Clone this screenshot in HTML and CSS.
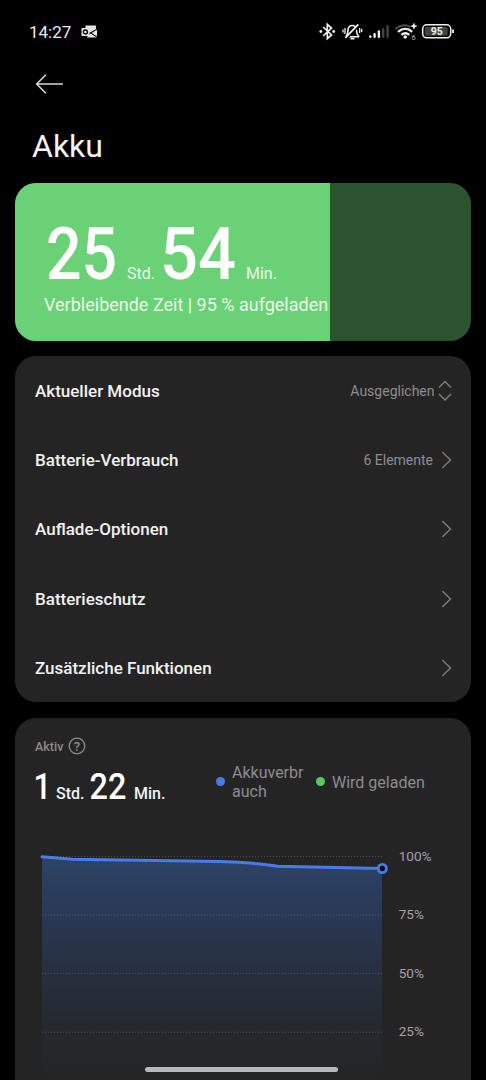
FILE: index.html
```html
<!DOCTYPE html>
<html lang="de">
<head>
<meta charset="utf-8">
<title>Akku</title>
<link rel="stylesheet" href="styles.css">
</head>
<body>
<div class="screen">
  <header class="status">
    <span class="clock">14:27</span>
    <svg class="mail" width="17" height="14" viewBox="0 0 17 14">
      <path d="M4.500 .5H15v5.500L10 8.500 4.500 5z M5.500 12.500H15.500V9l-5-1.500z" fill="#e4e4e4"/>
      <path d="M8.500 8.500L16 4.200M9.500 7.500l6 4.300" stroke="#000" stroke-width="1.100"/>
      <path d="M16 4.800v6.400L11 8z" fill="#e4e4e4"/>
      <rect x=".5" y="3" width="8" height="8" fill="#e4e4e4"/>
      <circle cx="4.400" cy="7" r="2" fill="none" stroke="#000" stroke-width="1.300"/>
    </svg>
    <svg class="tray" width="140" height="24" viewBox="316 20 140 24" fill="none" stroke="#f0f0f0">
      <path d="M323.200 27l8.300 8-4.200 3.700V24.300l4.200 3.700-8.300 8" stroke-width="1.700"/>
      <circle cx="320.800" cy="31.500" r="1.400" fill="#f0f0f0" stroke="none"/>
      <circle cx="333.700" cy="31.500" r="1.400" fill="#f0f0f0" stroke="none"/>
      <path d="M346.500 35.500c1.500-1.300 1.300-3 1.400-5 .3-3.200 2-5 4.300-5s4 1.800 4.300 5c.1 2 0 3.700 2 5.300v1h-12z" stroke-width="1.600"/>
      <path d="M350.500 38.600h4" stroke-width="1.800"/>
      <path d="M346.300 38.800l13.500-14" stroke="#000" stroke-width="2"/>
      <path d="M345.300 37.800L358.300 24.300" stroke-width="1.800"/>
      <path d="M345 28v6M343 29.500v3M359.700 28v5M361.700 29v3" stroke-width="1.300"/>
      <g stroke-width="2.400" stroke-linecap="round">
        <path d="M370.300 36.500v.3M374.600 34.300v2.500M378.900 31.500v5.300"/>
        <path d="M383.200 29v7.800M387.500 26.200v10.600" stroke="#444"/>
      </g>
      <path d="M395.500 29c5-4.500 11.500-4.500 14.800-2" stroke="#4b4b4b" stroke-width="2.300"/>
      <path d="M398 31.800c4.500-4 10-4 14.200 0M401.300 34.800c2.600-2 5.400-2 7.900 0" stroke-width="2.300"/>
      <circle cx="405.200" cy="37" r="1.800" fill="#f0f0f0" stroke="none"/>
      <path d="M413.900 23.500v5.200M411.300 26.100h5.200" stroke-width="1.700"/>
      <text x="411.400" y="39.500" class="wifi-gen">6</text>
      <rect x="422.700" y="24.800" width="28" height="13" rx="4" stroke-width="1.500"/>
      <rect x="424.700" y="26.800" width="23" height="9" rx="2" fill="#424242" stroke="none"/>
      <path d="M453 29.500v3.500" stroke-width="1.800"/>
      <text x="436.700" y="35.400" class="level">95</text>
    </svg>
  </header>

  <nav class="back">
    <svg width="30" height="22" viewBox="0 0 30 22" fill="none" stroke="#d6d6d6" stroke-width="1.600"><path d="M1.700 11H28M10.800 1.800L1.700 11l9.100 9.200"/></svg>
  </nav>
  <h1 class="title">Akku</h1>

  <section class="charge">
    <div class="fill">
      <div class="remaining">
        <span class="num n25"><b>25</b></span><span class="unit u-std">Std.</span><span class="num n54"><b>54</b></span><span class="unit">Min.</span>
      </div>
      <div class="caption">Verbleibende Zeit | 95 % aufgeladen</div>
    </div>
  </section>

  <section class="menu">
    <div class="row"><span>Aktueller Modus</span><span class="value mode">Ausgeglichen</span>
      <svg class="sort" width="14" height="22" viewBox="0 0 14 22"><path d="M1 7.500l6-6 6 6M1 14l6 6 6-6"/></svg></div>
    <div class="row"><span>Batterie-Verbrauch</span><span class="value">6 Elemente</span>
      <svg class="chev" width="11" height="18" viewBox="0 0 11 18"><path d="M1.300 1l8.200 8-8.200 8"/></svg></div>
    <div class="row"><span>Auflade-Optionen</span>
      <svg class="chev" width="11" height="18" viewBox="0 0 11 18"><path d="M1.300 1l8.200 8-8.200 8"/></svg></div>
    <div class="row"><span>Batterieschutz</span>
      <svg class="chev" width="11" height="18" viewBox="0 0 11 18"><path d="M1.300 1l8.200 8-8.200 8"/></svg></div>
    <div class="row"><span>Zusätzliche Funktionen</span>
      <svg class="chev" width="11" height="18" viewBox="0 0 11 18"><path d="M1.300 1l8.200 8-8.200 8"/></svg></div>
  </section>

  <section class="usage">
    <div class="active">
      <span>Aktiv</span>
      <svg width="18" height="18" viewBox="0 0 18 18"><circle cx="9" cy="9" r="7.800" fill="none" stroke="#8c8c8c" stroke-width="1.300"/><text x="9" y="13.800" class="help">?</text></svg>
    </div>
    <div class="summary">
      <div class="duration">
        <span class="small n1"><b>1</b></span><span class="sunit s-std">Std.</span><span class="small n22"><b>22</b></span><span class="sunit">Min.</span>
      </div>
      <div class="legend">
        <i class="dot blue"></i><span class="used">Akkuverbr<br>auch</span>
        <i class="dot green"></i><span class="charging">Wird geladen</span>
      </div>
    </div>
    <svg class="chart" width="456" height="240" viewBox="15 840 456 240">
      <defs>
        <linearGradient id="area" x1="0" y1="857" x2="0" y2="1080" gradientUnits="userSpaceOnUse">
          <stop offset="0" stop-color="#2d4368"/>
          <stop offset=".25" stop-color="#293956"/>
          <stop offset=".5" stop-color="#273041"/>
          <stop offset=".75" stop-color="#25292f"/>
          <stop offset="1" stop-color="#242424"/>
        </linearGradient>
      </defs>
      <path d="M42 857L72 859.500 220 861.500 258 864 278 866.300 382 868.500V1080H42z" fill="url(#area)"/>
      <g class="grid"><path d="M42 856.500H384M42 915H384M42 973.500H384M42 1032.200H384"/></g>
      <path d="M42 856.800L72 859.300 220 861.400Q240 862 258 863.800L278 866.200 382 868.500" class="line"/>
      <circle cx="382.300" cy="868.500" r="4.100" fill="#0b0e18" stroke="#4a7bea" stroke-width="2.900"/>
      <g class="ticks"><text x="398.700" y="860.700">100%</text><text x="398.700" y="919.200">75%</text><text x="398.700" y="977.600">50%</text><text x="398.700" y="1036.200">25%</text></g>
    </svg>
  </section>
  <div class="home"></div>
</div>
</body>
</html>
```

FILE: styles.css
```css
* { box-sizing: border-box; }
body { margin: 0; background: #000; color: #f2f2f2; font-family: Roboto, "Liberation Sans", sans-serif; }
svg { display: block; flex: none; }
.screen { position: relative; width: 486px; height: 1080px; overflow: hidden; padding: 0 15px; }

.status { display: flex; align-items: center; height: 64px; padding-left: 14px; }
.clock { width: 52px; font-size: 17px; color: #ececec; }
.tray { margin-left: auto; margin-right: 15px; }
.mail { margin-bottom: 1px; }
.wifi-gen { font-size: 7.5px; fill: #bbb; stroke: none; }
.level { font-size: 10.5px; font-weight: 700; fill: #f0f0f0; stroke: none; text-anchor: middle; }

.back { height: 42px; padding: 9px 0 0 20px; }
.title { margin: 0; height: 77px; padding: 20px 0 0 17px; font-size: 32px; line-height: 40px; font-weight: 400; }

.charge { height: 157.500px; border-radius: 21px; overflow: hidden; background: #2b532f; }
.fill { width: 315px; height: 100%; padding: 37px 0 0 29px; background: #6bd176; color: #fff; white-space: nowrap; }
.remaining { display: flex; align-items: baseline; height: 70px; line-height: 70px; }
.num { font-size: 72px; }
.num b, .small b { display: inline-block; font-weight: 500; transform: scaleX(.87); transform-origin: 0 0; }
.n25 { width: 83px; padding-left: 2px; }
.n54 { width: 86px; }
.n54 b { transform: scaleX(.93); }
.unit { font-size: 16px; color: #e9f9ea; }
.u-std { width: 33px; }
.caption { margin-top: 4px; font-size: 18px; line-height: 22px; color: #e9f9ea; }

.menu { margin-top: 15.500px; height: 346px; border-radius: 21px; background: #242424; }
.row { display: flex; align-items: center; height: 69.300px; padding: 0 19px 0 20px; font-size: 17px; font-weight: 500; }
.row svg { margin-left: auto; fill: none; stroke: #7c7c7c; stroke-width: 1.500; }
.value { margin-left: auto; font-size: 14px; font-weight: 400; color: #8d8d8d; }
.value + .chev { margin-left: 8px; }
.value + .sort { margin-left: 3.500px; }

.usage { margin-top: 16px; height: 370px; padding-top: 18px; border-radius: 21px 21px 0 0; background: #242424; }
.active { display: flex; align-items: center; gap: 5px; height: 20px; padding-left: 20px; font-size: 12.500px; font-weight: 500; color: #8c8c8c; }
.help { font-size: 13px; fill: #8c8c8c; text-anchor: middle; }
.summary { display: flex; height: 84px; padding-left: 20px; }
.duration { display: flex; align-items: baseline; width: 181px; height: 50px; line-height: 50px; padding-top: 6px; }
.small { font-size: 36px; color: #fff; }
.n1 { width: 21px; }
.n1 b { transform: translateX(-1.500px) scaleX(.87); }
.n22 { width: 45px; }
.n22 b { transform: translateX(.5px) scaleX(.9); }
.s-std { width: 33px; }
.sunit { font-size: 16px; font-weight: 500; }
.legend { display: flex; align-items: center; height: 52px; color: #8d8d8d; font-size: 16px; line-height: 19px; white-space: nowrap; }
.dot { width: 9px; height: 9px; border-radius: 50%; margin: -2px 7px 0 0; }
.blue { background: #4a7bea; }
.green { background: #5ac75f; }
.used { width: 84px; }
.grid path { stroke: #8da0b0; stroke-opacity: .35; stroke-dasharray: 1 2; fill: none; }
.line { fill: none; stroke: #4a7bea; stroke-width: 3; stroke-linecap: round; stroke-linejoin: round; }
.ticks text { font-size: 13.600px; fill: #a2a2a2; }
.home { position: absolute; left: 145px; top: 1067px; width: 193px; height: 5px; border-radius: 3px; background: #b8b8b8; }
```
